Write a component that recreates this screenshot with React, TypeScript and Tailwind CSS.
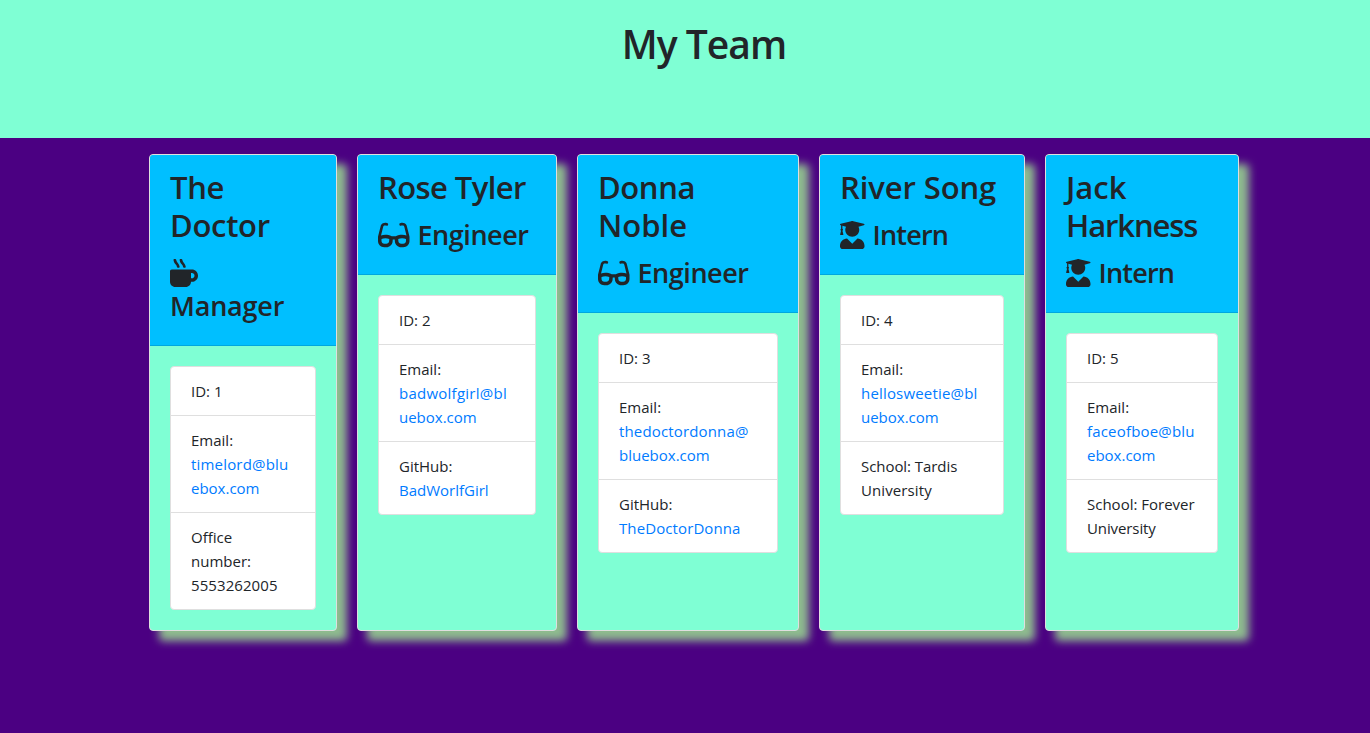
import type { IconType } from "react-icons";
import { FaGlasses, FaMugHot, FaUserGraduate } from "react-icons/fa";

type Line = { text: string; link?: boolean; tracking?: string };
type Member = {
  width: string;
  name: Line[];
  role: Line;
  Icon: IconType;
  iconWidth: string;
  stacked?: boolean;
  rows: Line[][];
};

const t = (text: string, tracking = ""): Line => ({ text, tracking });
const a = (text: string, tracking = ""): Line => ({ text, link: true, tracking });

const team: Member[] = [
  {
    width: "w-[188px]",
    name: [t("The", "tracking-[-0.3px]"), t("Doctor", "tracking-[-0.3px]")],
    role: t("Manager", "tracking-[-0.2px]"),
    Icon: FaMugHot,
    iconWidth: "w-7",
    stacked: true,
    rows: [
      [t("ID: 1")],
      [t("Email:"), a("timelord@blu", "tracking-[0.18px]"), a("ebox.com")],
      [t("Office"), t("number:"), t("5553262005", "tracking-[0.08px]")],
    ],
  },
  {
    width: "w-[200px]",
    name: [t("Rose Tyler", "tracking-[-0.6px]")],
    role: t("Engineer", "tracking-[-0.45px]"),
    Icon: FaGlasses,
    iconWidth: "w-[31.5px]",
    rows: [
      [t("ID: 2")],
      [t("Email:"), a("badwolfgirl@bl", "tracking-[0.25px]"), a("uebox.com")],
      [t("GitHub:"), a("BadWorlfGirl")],
    ],
  },
  {
    width: "w-[222px]",
    name: [t("Donna", "tracking-[-0.4px]"), t("Noble")],
    role: t("Engineer", "tracking-[-0.45px]"),
    Icon: FaGlasses,
    iconWidth: "w-[31.5px]",
    rows: [
      [t("ID: 3")],
      [t("Email:"), a("thedoctordonna@", "tracking-[0.15px]"), a("bluebox.com")],
      [t("GitHub:"), a("TheDoctorDonna", "tracking-[0.1px]")],
    ],
  },
  {
    width: "w-[206px]",
    name: [t("River Song", "tracking-[-0.1px]")],
    role: t("Intern", "tracking-[-0.8px]"),
    Icon: FaUserGraduate,
    iconWidth: "w-[24.5px]",
    rows: [
      [t("ID: 4")],
      [t("Email:"), a("hellosweetie@bl", "tracking-[0.18px]"), a("uebox.com")],
      [t("School: Tardis", "tracking-[-0.06px]"), t("University", "tracking-[0.1px]")],
    ],
  },
  {
    width: "w-[194px]",
    name: [t("Jack"), t("Harkness", "tracking-[-1.1px]")],
    role: t("Intern", "tracking-[-0.8px]"),
    Icon: FaUserGraduate,
    iconWidth: "w-[24.5px]",
    rows: [
      [t("ID: 5")],
      [t("Email:"), a("faceofboe@blu", "tracking-[0.18px]"), a("ebox.com")],
      [t("School: Forever"), t("University", "tracking-[-0.1px]")],
    ],
  },
];

function Card({ member }: { member: Member }) {
  const { Icon } = member;
  return (
    <article
      className={`${member.width} flex shrink-0 flex-col overflow-hidden rounded border border-[#dfdfdf] bg-[#7fffd4] shadow-[10px_10px_8px_#8fbc8f]`}
    >
      <header className="border-b border-[#00a7df] bg-[#00bfff] px-5 pt-[13px] pb-[23px] font-semibold whitespace-nowrap">
        <h2 className="mb-3 text-[31px] leading-[38px]">
          {member.name.map((line) => (
            <span key={line.text} className={`block ${line.tracking}`}>{line.text}</span>
          ))}
        </h2>
        <h3 className={`flex text-[27px] leading-[33px] ${member.stacked ? "flex-col" : "items-start gap-2"}`}>
          <span className="flex h-[33px] items-center">
            <Icon className={`h-7 ${member.iconWidth}`} />
          </span>
          <span className={member.role.tracking}>{member.role.text}</span>
        </h3>
      </header>
      <div className="p-5">
        <ul className="divide-y divide-[#dfdfdf] rounded border border-[#dfdfdf] bg-white text-[15px] leading-6 whitespace-nowrap">
          {member.rows.map((row, i) => (
            <li key={i} className="px-5 py-3">
              {row.map((line) =>
                line.link ? (
                  <a key={line.text} className={`block text-[#007bff] ${line.tracking}`}>{line.text}</a>
                ) : (
                  <span key={line.text} className={`block ${line.tracking}`}>{line.text}</span>
                ),
              )}
            </li>
          ))}
        </ul>
      </div>
    </article>
  );
}

export default function App() {
  return (
    <div className="h-[733px] overflow-hidden bg-[#4b0082] font-['Open_Sans','Noto_Sans',sans-serif] text-[#212529]">
      <div className="flex h-[138px] justify-center bg-[#7fffd4] pt-5 pl-[38px]">
        <h1 className="text-[39px] leading-[48px] font-semibold tracking-[-1px]">My Team</h1>
      </div>
      <main className="mt-4 ml-[149px] flex h-[477px] gap-5">
        {team.map((member) => (
          <Card key={member.width} member={member} />
        ))}
      </main>
    </div>
  );
}
